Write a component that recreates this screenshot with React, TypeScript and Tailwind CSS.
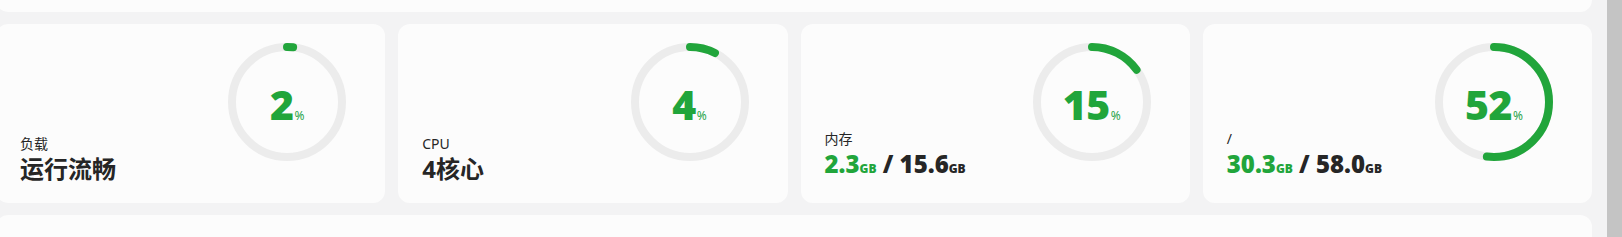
import React from "react";

type Item = {
  label: string;
  percent: number;
  arc: number;
  value: React.ReactNode;
};

const GREEN = "#21a53b";

function Ring({ percent, arc }: { percent: number; arc: number }) {
  const r = 55;
  const c = 2 * Math.PI * r;
  const len = (arc / 100) * c;
  return (
    <div className="relative h-[118px] w-[118px] shrink-0">
      <svg width="118" height="118" viewBox="0 0 118 118" className="block">
        <circle cx="59" cy="59" r={r} fill="none" stroke="#ececec" strokeWidth="8" />
        <circle
          cx="59"
          cy="59"
          r={r}
          fill="none"
          stroke={GREEN}
          strokeWidth="8"
          strokeLinecap="round"
          strokeDasharray={`${len} ${c}`}
          transform="rotate(-90 59 59)"
        />
      </svg>
      <div className="absolute inset-0 flex items-center justify-center pt-[4px]">
        <div className="flex items-baseline text-[#21a53b]">
          <span className="text-[41px] font-extrabold leading-none tracking-[-0.5px]" style={{ fontFamily: '"Open Sans", "Noto Sans", sans-serif' }}>
            {percent}
          </span>
          <span className="ml-[1px] text-[12px] leading-none text-[#2aa44a]" style={{ fontFamily: '"Noto Sans", sans-serif' }}>
            %
          </span>
        </div>
      </div>
    </div>
  );
}

function Size({ used, total }: { used: string; total: string }) {
  return (
    <span className="font-extrabold" style={{ fontFamily: '"Open Sans", "Noto Sans", sans-serif' }}>
      <span className="text-[#21a53b]">
        {used}
        <span className="text-[12px]">GB</span>
      </span>
      <span className="text-[#262626]">
        {" / "}
        {total}
        <span className="text-[12px]">GB</span>
      </span>
    </span>
  );
}

const items: Item[] = [
  { label: "负载", percent: 2, arc: 1.8, value: "运行流畅" },
  { label: "CPU", percent: 4, arc: 7.5, value: "4核心" },
  { label: "内存", percent: 15, arc: 15, value: <Size used="2.3" total="15.6" /> },
  { label: "/", percent: 52, arc: 52, value: <Size used="30.3" total="58.0" /> },
];

function Card({ item }: { item: Item }) {
  return (
    <div className="flex h-[179px] items-start justify-between rounded-[12px] bg-[#fcfcfc] pl-6 pr-[39px] pt-[19px]">
      <div className="flex h-full flex-col justify-end pb-[19px]">
        <div className="text-[14px] leading-[18px] text-[#262626]">{item.label}</div>
        <div className="mt-[1px] text-[24px] font-bold leading-[30px] text-[#262626]">{item.value}</div>
      </div>
      <Ring percent={item.percent} arc={item.arc} />
    </div>
  );
}

export default function App() {
  return (
    <div
      className="flex h-[237px] w-[1622px] overflow-hidden bg-[#f3f3f4]"
      style={{ fontFamily: '"Noto Sans", "Noto Sans CJK SC", sans-serif' }}
    >
      <div className="flex-1 overflow-hidden">
        <div className="ml-[-4px] mr-[15px] mt-[-28px] flex flex-col gap-3">
          <div className="h-[40px] rounded-[12px] bg-[#fcfcfc]" />
          <div className="grid grid-cols-4 gap-[13px]">
            {items.map((it) => (
              <Card key={it.label} item={it} />
            ))}
          </div>
          <div className="h-[60px] rounded-[12px] bg-[#fcfcfc]" />
        </div>
      </div>
      <div className="w-[15px] bg-[#c4c4c4]" />
    </div>
  );
}
